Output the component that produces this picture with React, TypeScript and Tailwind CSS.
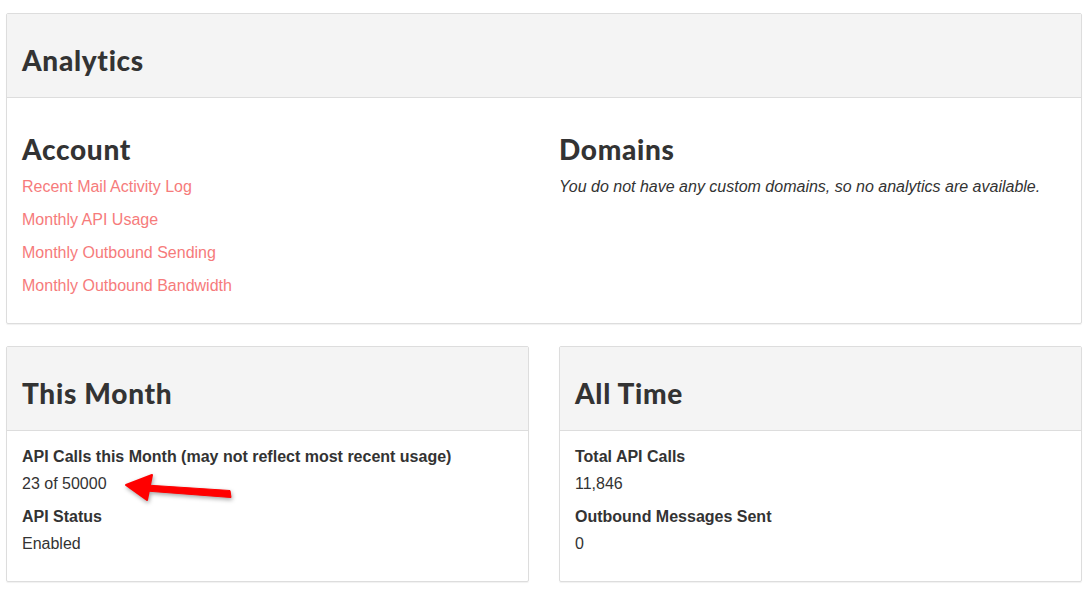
const heading = "font-['Lato','Open_Sans',sans-serif] font-black text-[28px] leading-[34px] tracking-[0.7px] text-[#333]";

const CardHeader = ({ title }: { title: string }) => (
  <div className="bg-[#f4f4f4] border-b border-[#ddd] px-[15px] pt-[29px] pb-[20px]">
    <h2 className={heading}>{title}</h2>
  </div>
);

const Stat = ({ label, value }: { label: string; value: string }) => (
  <div>
    <div className="font-bold leading-[23px] mb-[4px]">{label}</div>
    <div className="leading-[23px] mb-[10px]">{value}</div>
  </div>
);

const links = [
  "Recent Mail Activity Log",
  "Monthly API Usage",
  "Monthly Outbound Sending",
  "Monthly Outbound Bandwidth",
];

export default function App() {
  return (
    <div className="relative min-h-screen bg-white px-[6px] pt-[13px] font-['Liberation_Sans',Arial,sans-serif] text-[16px] text-[#333]">
      {/* analytics card */}
      <section className="border border-[#ddd] rounded-[2px] shadow-[0_1px_1px_rgba(0,0,0,0.06)]">
        <CardHeader title="Analytics" />
        <div className="grid grid-cols-2 gap-[30px] px-[15px] pt-[34px] pb-[16px]">
          <div>
            <h2 className={`${heading} mb-[9px]`}>Account</h2>
            {links.map((l) => (
              <p key={l} className="leading-[23px] mb-[10px]">
                <a href="#" className="text-[#f67b7b]">
                  {l}
                </a>
              </p>
            ))}
          </div>
          <div>
            <h2 className={`${heading} mb-[9px]`}>Domains</h2>
            <p className="italic leading-[23px]">
              You do not have any custom domains, so no analytics are available.
            </p>
          </div>
        </div>
      </section>

      {/* stats cards */}
      <div className="grid grid-cols-2 gap-[30px] mt-[22px]">
        <section className="border border-[#ddd] rounded-[2px] shadow-[0_1px_1px_rgba(0,0,0,0.06)]">
          <CardHeader title="This Month" />
          <div className="px-[15px] pt-[14px] pb-[16px]">
            <Stat label="API Calls this Month (may not reflect most recent usage)" value="23 of 50000" />
            <Stat label="API Status" value="Enabled" />
          </div>
        </section>
        <section className="border border-[#ddd] rounded-[2px] shadow-[0_1px_1px_rgba(0,0,0,0.06)]">
          <CardHeader title="All Time" />
          <div className="px-[15px] pt-[14px] pb-[16px]">
            <Stat label="Total API Calls" value="11,846" />
            <Stat label="Outbound Messages Sent" value="0" />
          </div>
        </section>
      </div>

      {/* red annotation arrow */}
      <svg
        className="absolute left-[120px] top-[468px] drop-shadow-[1px_2px_2px_rgba(0,0,0,0.35)]"
        width="120"
        height="40"
        viewBox="120 468 120 40"
      >
        <polygon points="146,485 230,490.5 231,497.5 146,491" fill="#f00" stroke="#f00" strokeWidth="1" strokeLinejoin="round" />
        <polygon points="126,485 152,475 147,500" fill="#f00" stroke="#f00" strokeWidth="2" strokeLinejoin="round" />
      </svg>
    </div>
  );
}
